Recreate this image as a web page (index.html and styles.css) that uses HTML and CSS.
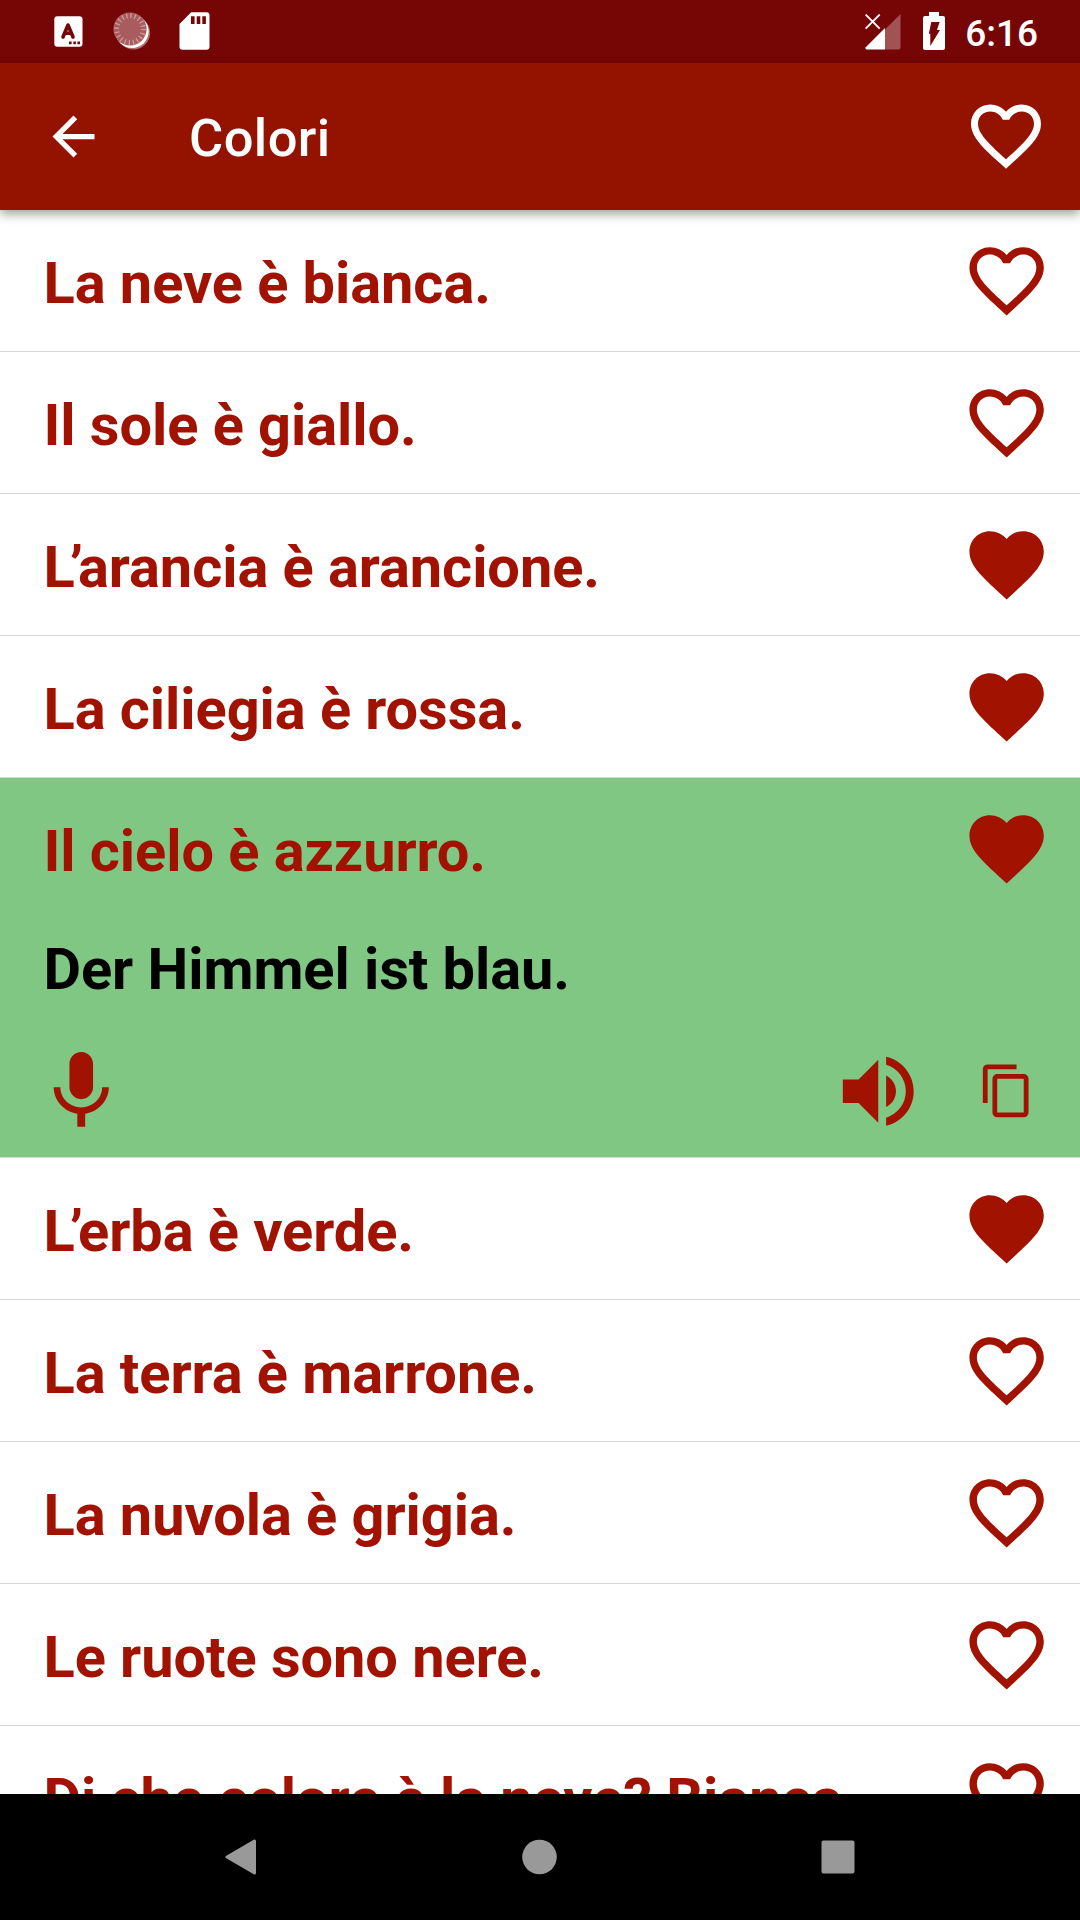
FILE: index.html
```html
<!DOCTYPE html>
<html lang="it">
<head>
<meta charset="utf-8">
<title>Colori</title>
<link rel="stylesheet" href="styles.css">
</head>
<body>
<svg class="defs" width="0" height="0" aria-hidden="true">
  <symbol id="heart-outline" viewBox="0 0 24 24"><path d="M12.1 18.55L12 18.65L11.89 18.55C7.14 14.24 4 11.39 4 8.5C4 6.5 5.5 5 7.5 5C9.04 5 10.54 6 11.07 7.36H12.93C13.46 6 14.96 5 16.5 5C18.5 5 20 6.5 20 8.5C20 11.39 16.86 14.24 12.1 18.55M16.5 3C14.76 3 13.09 3.81 12 5.08C10.91 3.81 9.24 3 7.5 3C4.42 3 2 5.41 2 8.5C2 12.27 5.4 15.36 10.55 20.03L12 21.35L13.45 20.03C18.6 15.36 22 12.27 22 8.5C22 5.41 19.58 3 16.5 3Z"/></symbol>
  <symbol id="heart" viewBox="0 0 24 24"><path d="M12 21.35L10.55 20.03C5.4 15.36 2 12.27 2 8.5C2 5.41 4.42 3 7.5 3C9.24 3 10.91 3.81 12 5.08C13.09 3.81 14.76 3 16.5 3C19.58 3 22 5.41 22 8.5C22 12.27 18.6 15.36 13.45 20.03L12 21.35Z"/></symbol>
</svg>
<div class="screen">
  <header class="status">
    <div class="status-left">
      <svg width="29" height="31" viewBox="0 0 29 31"><rect x="0.3" y="0.3" width="28.2" height="30.4" rx="3" fill="#fff"/><path d="M9 21L14 9L19 21M10.8 17.3H17.2" fill="none" stroke="#760606" stroke-width="3.6" stroke-linecap="round" stroke-linejoin="round"/><path d="M15 25.6h2.6v2.6h-2.6zM19.3 25.6h2.6v2.6h-2.6zM23.4 25.6h2.6v2.6h-2.6z" fill="#760606"/></svg>
      <svg width="38" height="38" viewBox="0 0 38 38"><circle cx="20.5" cy="20.8" r="16.6" fill="#b56a6b"/><circle cx="19" cy="19.4" r="16.6" fill="#fff"/><circle cx="17" cy="17" r="16.6" fill="#a95c5d"/><circle cx="17" cy="17" r="13.4" fill="none" stroke="#cf9fa0" stroke-width="5" stroke-dasharray="1.2 3.01"/></svg>
      <svg width="31" height="38" viewBox="0 0 31 38"><path fill="#fff" fill-rule="evenodd" d="M12.2.3H27.5A3 3 0 0 1 30.5 3.3V34.7A3 3 0 0 1 27.5 37.7H3.5A3 3 0 0 1 .5 34.7V12ZM12 4.3V12h3.6V4.3ZM17.700 4.3V12h3.6V4.3ZM23.3 4.3V12h3.6V4.3Z"/></svg>
    </div>
    <div class="status-right">
      <svg width="36" height="36" viewBox="0 0 36 36"><path d="M20 15.5L35.5 0V33.5A2 2 0 0 1 33.5 35.5H20Z" fill="#a15354"/><path d="M20 14V35.5H1.5Q0 35 .5 33.5Z" fill="#fff"/><path d="M.6.6L14.7 14.7M14.7.6L.6 14.7" stroke="#fff" stroke-width="1.9"/></svg>
      <svg width="22" height="38" viewBox="0 0 22 38"><path fill="#fff" d="M6 0H16V4H20A2 2 0 0 1 22 6V36A2 2 0 0 1 20 38H2A2 2 0 0 1 0 36V6A2 2 0 0 1 2 4H6Z"/><path fill="#760606" d="M8.3 10H16.6L14 18H17L7.3 34V21.7H5.8Z"/></svg>
      <span class="clock">6:16</span>
    </div>
  </header>
  <nav class="appbar">
    <svg class="back" viewBox="0 0 24 24"><path d="M20 11H7.83L13.42 5.41L12 4L4 12L12 20L13.41 18.59L7.83 13H20Z"/></svg>
    <h1>Colori</h1>
    <svg class="bar-heart"><use href="#heart-outline"/></svg>
  </nav>
  <main class="list">
    <article class="item"><div class="row"><p>La neve è bianca.</p><svg class="fav"><use href="#heart-outline"/></svg></div></article>
    <article class="item"><div class="row"><p>Il sole è giallo.</p><svg class="fav"><use href="#heart-outline"/></svg></div></article>
    <article class="item"><div class="row"><p><span class="elision">L’</span>arancia è arancione.</p><svg class="fav"><use href="#heart"/></svg></div></article>
    <article class="item"><div class="row"><p>La ciliegia è rossa.</p><svg class="fav"><use href="#heart"/></svg></div></article>
    <article class="item open">
      <div class="row"><p>Il cielo è azzurro.</p><svg class="fav"><use href="#heart"/></svg></div>
      <p class="translation">Der Himmel ist blau.</p>
      <div class="actions">
        <svg class="mic" viewBox="0 0 24 24"><path d="M12 14c1.66 0 3-1.34 3-3V5c0-1.66-1.34-3-3-3S9 3.34 9 5v6c0 1.66 1.34 3 3 3zM17.3 11c0 3-2.54 5.1-5.3 5.1S6.7 14 6.7 11H5c0 3.41 2.72 6.23 6 6.72V21h2v-3.28c3.28-.48 6-3.3 6-6.72z"/></svg>
        <svg class="speak" viewBox="0 0 24 24"><path d="M3 9v6h4l5 5V4L7 9H3zm13.500 3c0-1.77-1.02-3.29-2.5-4.03v8.05c1.48-.73 2.5-2.25 2.5-4.02zM14 3.23v2.06c2.89.86 5 3.54 5 6.71s-2.11 5.85-5 6.71v2.06c4.01-.91 7-4.49 7-8.77s-2.99-7.86-7-8.77z"/></svg>
        <svg class="copy" viewBox="0 0 24 24"><path d="M19 21H8V7H19M19 5H8A2 2 0 0 0 6 7V21A2 2 0 0 0 8 23H19A2 2 0 0 0 21 21V7A2 2 0 0 0 19 5M16 1H4A2 2 0 0 0 2 3V17H4V3H16V1Z"/></svg>
      </div>
    </article>
    <article class="item"><div class="row"><p><span class="elision">L’</span>erba è verde.</p><svg class="fav"><use href="#heart"/></svg></div></article>
    <article class="item"><div class="row"><p>La terra è marrone.</p><svg class="fav"><use href="#heart-outline"/></svg></div></article>
    <article class="item"><div class="row"><p>La nuvola è grigia.</p><svg class="fav"><use href="#heart-outline"/></svg></div></article>
    <article class="item"><div class="row"><p>Le ruote sono nere.</p><svg class="fav"><use href="#heart-outline"/></svg></div></article>
    <article class="item"><div class="row"><p>Di che colore è la neve? Bianca.</p><svg class="fav"><use href="#heart-outline"/></svg></div></article>
  </main>
  <footer class="navbar">
    <svg width="36" height="36" viewBox="0 0 36 36"><path d="M4 18L31.5 2V34Z" stroke="#999" stroke-width="3" stroke-linejoin="round"/></svg>
    <svg width="36" height="36" viewBox="0 0 36 36"><circle cx="17.5" cy="18" r="17.3"/></svg>
    <svg width="36" height="36" viewBox="0 0 36 36"><rect x="1.5" y="1.5" width="33" height="33" rx="2"/></svg>
  </footer>
</div>
</body>
</html>
```
FILE: styles.css
```css
* { box-sizing: border-box; margin: 0; padding: 0; }

body {
  width: 1080px;
  height: 1920px;
  overflow: hidden;
  background: #fff;
  font-family: Roboto, sans-serif;
}

svg { display: block; flex: none; }
.defs { position: absolute; }

.screen {
  display: grid;
  grid-template-rows: 63px 147px 1584px 126px;
  height: 1920px;
}

.status {
  display: flex;
  justify-content: space-between;
  padding: 12px 42px 0 54px;
  background: #760606;
  color: #fff;
}

.status-left { display: flex; gap: 29.5px; align-items: flex-start; }
.status-left svg:first-child { margin-top: 4px; }
.status-left svg:last-child { margin-left: -1.5px; }

.status-right { display: flex; align-items: flex-start; }
.status-right svg:first-child { margin: 2px 22px 0 0; }

.clock {
  margin-left: 20px;
  font-size: 37px;
  font-weight: 500;
  line-height: 43px;
}

.appbar {
  position: relative;
  z-index: 1;
  display: flex;
  align-items: center;
  padding: 0 32px 0 42px;
  background: #931300;
  color: #fff;
  fill: #fff;
  box-shadow: 0 4px 10px rgba(0, 0, 0, .38);
}

.back { width: 63px; height: 63px; }

.appbar h1 {
  flex: 1;
  margin: 3px 0 0 84px;
  font-size: 52.5px;
  font-weight: 500;
  letter-spacing: .4px;
  line-height: 62px;
}

.bar-heart { width: 84px; height: 84px; margin-top: -2px; }

.list { overflow: hidden; color: #a11200; fill: #a11200; }
.item { border-bottom: 1px solid #d8d8d8; }

.row {
  display: flex;
  align-items: center;
  justify-content: space-between;
  height: 141px;
  padding: 0 29px 0 43.5px;
}

.item p {
  font-size: 57.75px;
  font-weight: 700;
  letter-spacing: -.06px;
  line-height: 68px;
  white-space: nowrap;
}

.elision { letter-spacing: -5px; }

.row p { padding-top: 4px; }
.fav { width: 89.25px; height: 89.25px; }
.open { background: #81c784; }
.item .translation { padding: 16px 42px 0 43.5px; color: #000; }

.actions {
  display: flex;
  align-items: center;
  height: 154px;
  padding: 40px 44px 18px 34px;
}

.mic, .speak { width: 94.5px; height: 94.5px; }
.speak { margin-left: auto; }
.copy { width: 57.75px; height: 57.75px; margin-left: 53px; }

.navbar {
  display: flex;
  justify-content: space-between;
  padding: 45px 224px 0 223px;
  background: #000;
  fill: #999;
}
```
